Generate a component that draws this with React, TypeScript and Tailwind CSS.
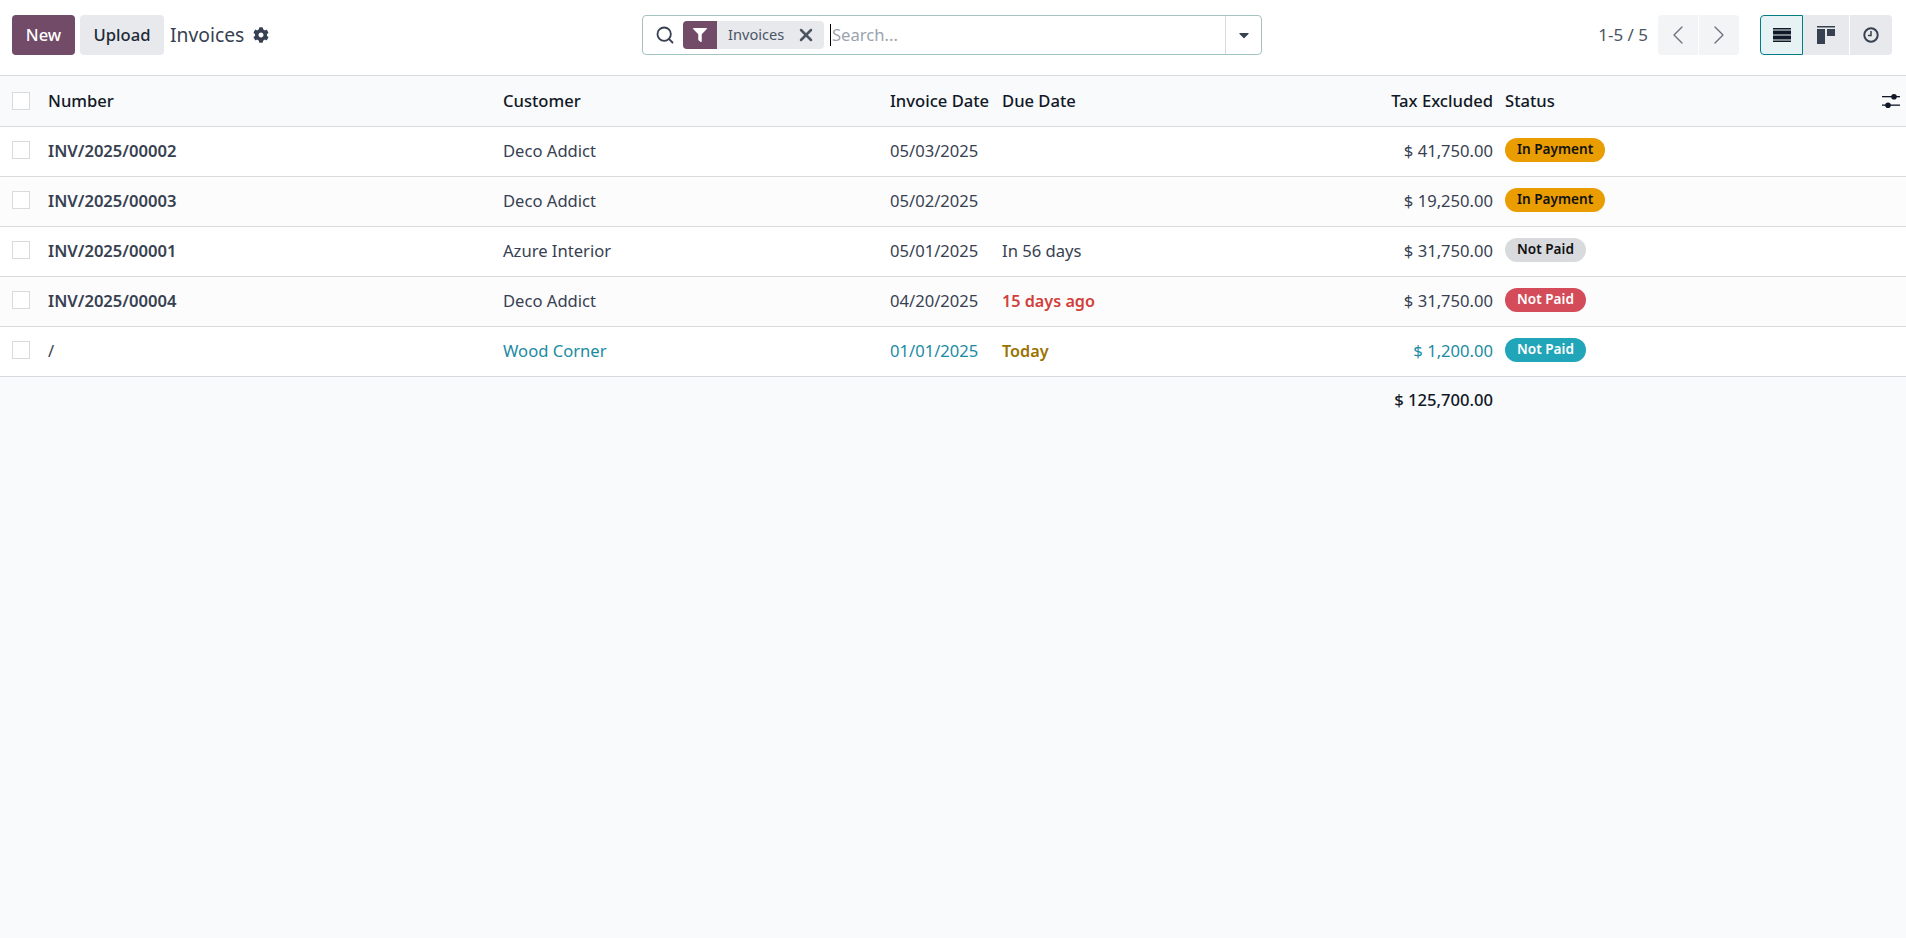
import React from 'react';
import { ChevronLeft, ChevronRight, Search, X } from 'lucide-react';
import { FaCaretDown, FaCog, FaFilter } from 'react-icons/fa';

interface InvoiceRow {
  number: string;
  customer: string;
  invoiceDate: string;
  due?: string;
  dueClass?: string;
  amount: string;
  status: string;
  badgeClass: string;
  draft?: boolean;
}

const rows: InvoiceRow[] = [
  { number: 'INV/2025/00002', customer: 'Deco Addict', invoiceDate: '05/03/2025', amount: '$ 41,750.00', status: 'In Payment', badgeClass: 'bg-[#e99d00] text-[#111]' },
  { number: 'INV/2025/00003', customer: 'Deco Addict', invoiceDate: '05/02/2025', amount: '$ 19,250.00', status: 'In Payment', badgeClass: 'bg-[#e99d00] text-[#111]' },
  { number: 'INV/2025/00001', customer: 'Azure Interior', invoiceDate: '05/01/2025', due: 'In 56 days', amount: '$ 31,750.00', status: 'Not Paid', badgeClass: 'bg-[#d8dadd] text-[#111]' },
  { number: 'INV/2025/00004', customer: 'Deco Addict', invoiceDate: '04/20/2025', due: '15 days ago', dueClass: 'text-[16.2px] font-semibold text-[#d23f3a]', amount: '$ 31,750.00', status: 'Not Paid', badgeClass: 'bg-[#d44c59] text-white' },
  { number: '/', customer: 'Wood Corner', invoiceDate: '01/01/2025', due: 'Today', dueClass: 'text-[16.2px] font-semibold text-[#9a7200]', amount: '$ 1,200.00', status: 'Not Paid', badgeClass: 'bg-[#21a5b8] text-white', draft: true },
];

const Checkbox = () => <div className="h-[18px] w-[18px] border border-[#d8dadd] bg-white" />;

const App = () => {
  return (
    <div className="min-h-screen bg-[#f9fafb] font-['Noto_Sans',sans-serif] text-[16.6px] text-[#374151]">
      {/* Control panel */}
      <div className="flex h-[75px] items-start bg-white pt-[15px]">
        <div className="flex h-10 w-[642px] items-center pl-3">
          <button className="h-10 w-[63px] rounded-[4px] bg-[#714b67] font-medium text-white">New</button>
          <button className="ml-[5px] h-10 w-[84px] rounded-[4px] bg-[#e7e9ed] font-medium text-[#1f2937]">Upload</button>
          <span className="ml-[6px] text-[19.3px] text-[#374151]">Invoices</span>
          <FaCog className="ml-[9px] h-4 w-4 text-[#374151]" />
        </div>

        <div className="flex h-10 w-[620px] items-center rounded-[4px] border border-[#a3c4c0] bg-white">
          <Search className="ml-3 h-5 w-5 text-[#374151]" strokeWidth={2.2} />
          <div className="ml-2 flex h-7 w-[141px] items-center rounded-[4px] bg-[#e7e9ed]">
            <div className="flex h-7 w-[34px] items-center justify-center rounded-l-[4px] bg-[#714b67]">
              <FaFilter className="h-[14px] w-[14px] text-white" />
            </div>
            <span className="ml-[11px] text-[14.6px] text-[#4b5563]">Invoices</span>
            <X className="ml-[12px] h-[20px] w-[20px] text-[#4b5563]" strokeWidth={3} />
          </div>
          <div className="ml-[6px] h-[22px] w-px bg-black" />
          <span className="ml-px flex-1 text-[#9ca3af]">Search...</span>
          <div className="flex h-full w-[36px] items-center justify-center border-l border-[#d8dadd]">
            <FaCaretDown className="h-4 w-4 text-[#374151]" />
          </div>
        </div>

        <div className="ml-auto flex h-10 items-center pr-[14px]">
          <span className="whitespace-nowrap text-[17px] text-[#4b5563]">1-5 / 5</span>
          <div className="ml-[10px] flex gap-px">
            <button className="flex h-10 w-[40px] items-center justify-center rounded-l-[4px] bg-[#f3f4f6] text-[#6b7280]">
              <ChevronLeft className="h-8 w-8" strokeWidth={1} />
            </button>
            <button className="flex h-10 w-[40px] items-center justify-center rounded-r-[4px] bg-[#f3f4f6] text-[#6b7280]">
              <ChevronRight className="h-8 w-8" strokeWidth={1} />
            </button>
          </div>
          <div className="ml-[21px] flex">
            <button className="flex h-10 w-[43px] items-center justify-center rounded-l-[4px] border border-[#017e84] bg-[#e6f2f3]">
              <svg width="18" height="14" viewBox="0 0 18 14" fill="#111827">
                <rect y="0" width="18" height="1.5" />
                <rect y="2.5" width="18" height="4" />
                <rect y="7.5" width="18" height="4" />
                <rect y="12.5" width="18" height="1.5" />
              </svg>
            </button>
            <button className="flex h-10 w-[46px] items-center justify-center bg-[#e7e9ed]">
              <svg width="18" height="18" viewBox="0 0 18 18" fill="#374151">
                <rect width="18" height="1.5" />
                <rect y="3" width="8" height="15" />
                <rect x="10" y="3" width="8" height="7" />
              </svg>
            </button>
            <button className="ml-px flex h-10 w-[42px] items-center justify-center rounded-r-[4px] bg-[#e7e9ed]">
              <svg width="16" height="16" viewBox="0 0 16 16" fill="none" stroke="#374151">
                <circle cx="8" cy="8" r="6.7" strokeWidth="2" />
                <path d="M8 4v4.6H5" strokeWidth="1.5" />
              </svg>
            </button>
          </div>
        </div>
      </div>

      {/* List */}
      <table className="w-full table-fixed border-collapse">
        <colgroup>
          <col className="w-[40px]" />
          <col className="w-[455px]" />
          <col className="w-[387px]" />
          <col className="w-[112px]" />
          <col className="w-[180px]" />
          <col className="w-[327px]" />
          <col />
        </colgroup>
        <thead>
          <tr className="h-[51px] border-y border-[#d8dadd] bg-[#f9fafb] text-left text-[#111827]">
            <th className="pl-3"><Checkbox /></th>
            <th className="px-2 font-medium">Number</th>
            <th className="px-2 font-medium">Customer</th>
            <th className="whitespace-nowrap px-2 font-medium">Invoice Date</th>
            <th className="px-2 font-medium">Due Date</th>
            <th className="px-2 text-right font-medium">Tax Excluded</th>
            <th className="pl-[4px] font-medium">
              <div className="flex items-center justify-between pr-[6px]">
                <span>Status</span>
                <svg width="18" height="16" viewBox="0 0 18 16" fill="#111827">
                  <rect y="3" width="18" height="1.3" />
                  <circle cx="12" cy="3.7" r="2.8" />
                  <rect y="11.5" width="18" height="1.3" />
                  <circle cx="6" cy="12.2" r="2.8" />
                </svg>
              </div>
            </th>
          </tr>
        </thead>
        <tbody>
          {rows.map((row, index) => (
            <tr key={index} className={`h-[50px] border-b border-[#d8dadd] ${index % 2 === 0 ? 'bg-white' : 'bg-[#fcfcfd]'} ${row.draft ? 'text-[#1a8ba3]' : ''}`}>
              <td className="pb-[3px] pl-3"><Checkbox /></td>
              <td className={`px-2 pb-[1px] text-[#374151] ${row.draft ? '' : 'font-semibold'}`}>{row.number}</td>
              <td className="px-2 pb-[1px]">{row.customer}</td>
              <td className="px-2 pb-[1px]">{row.invoiceDate}</td>
              <td className={`px-2 pb-[1px] ${row.dueClass ?? ''}`}>{row.due}</td>
              <td className="px-2 pb-[1px] text-right">{row.amount}</td>
              <td className="pb-[5px] pl-[4px]">
                <span className={`inline-flex h-6 items-center rounded-full px-3 text-[13.6px] font-semibold ${row.badgeClass}`}>{row.status}</span>
              </td>
            </tr>
          ))}
          <tr className="h-[50px]">
            <td colSpan={5} />
            <td className="px-2 pb-[3px] text-right font-medium text-[#111827]">$ 125,700.00</td>
            <td />
          </tr>
        </tbody>
      </table>
    </div>
  );
};

export default App;
